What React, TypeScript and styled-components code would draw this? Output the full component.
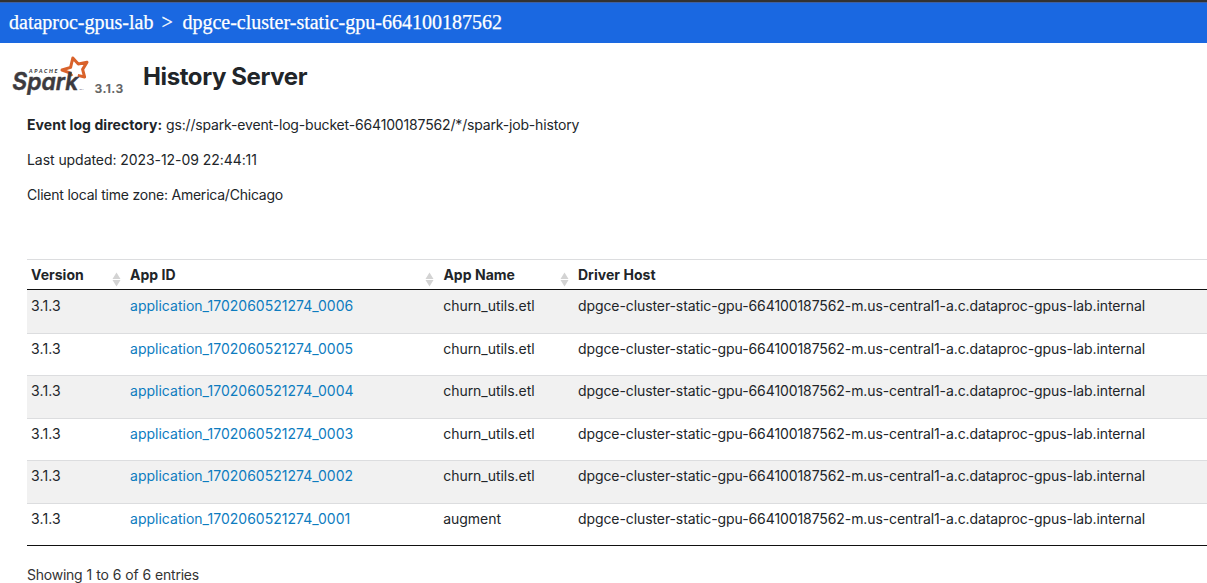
import React from "react";
import styled, { createGlobalStyle } from "styled-components";

const GlobalStyle = createGlobalStyle`
  * { box-sizing: border-box; }
  html, body { margin: 0; padding: 0; background: #fff; overflow: hidden; }
  body {
    font-family: Inter, "Liberation Sans", sans-serif;
    font-size: 14px;
    line-height: 20px;
    color: #212529;
  }
`;

const Page = styled.div`
  width: 100%;
  height: 583px;
  overflow: hidden;
`;

const ClusterBar = styled.header`
  display: flex;
  align-items: flex-start;
  height: 43px;
  padding: 0 0 0 9px;
  border-top: 2px solid #323232;
  box-shadow: inset 0 1px 0 #3f5f9f;
  background: #1a68e1;
  color: #fff;
  font: 20px/41px "Liberation Serif", serif;
  -webkit-text-stroke: 0.25px #fff;
  white-space: pre;
`;

const Separator = styled.span`
  width: 29px;
  padding-left: 8px;
`;

const TitleRow = styled.div`
  display: flex;
  height: 72px;
  padding-left: 12px;
`;

const Logo = styled.svg`
  display: block;
  width: 80px;
  height: 44px;
  margin-top: 12px;
`;

const Wordmark = styled.text`
  font: italic 600 24px Inter, sans-serif;
  font-feature-settings: "cv11";
  fill: #3c3a3e;
  stroke: #3c3a3e;
  stroke-width: 0.5px;
  stroke-linejoin: round;
`;

const Version = styled.span`
  width: 51px;
  padding: 36px 0 0 2.5px;
  color: #666;
  font-size: 12px;
  font-weight: 700;
  letter-spacing: 0.4px;
`;

const Title = styled.h1`
  margin: 19px 0 0;
  font-size: 24px;
  line-height: 30px;
  font-weight: 700;
  letter-spacing: -0.4px;
`;

const Details = styled.ul`
  display: flex;
  flex-direction: column;
  gap: 15px;
  height: 144px;
  margin: 0;
  padding: 0 0 0 27px;
  list-style: none;
`;

const Text = styled.span<{ $spacing: number; $word?: number }>`
  letter-spacing: ${(p) => p.$spacing}px;
  word-spacing: ${(p) => p.$word ?? 0}px;
  white-space: nowrap;
`;

const Label = styled.strong`
  font-weight: 700;
  letter-spacing: 0.07px;
`;

const Table = styled.div`
  margin-left: 27px;
  border-top: 1px solid #dcdddf;
  border-bottom: 1px solid #111;
`;

const Row = styled.div<{ $shaded?: boolean }>`
  display: grid;
  grid-template-columns: 99px 313.2px 134.8px 1fr;
  height: 42.5px;
  padding-top: 6px;
  background: ${(p) => (p.$shaded ? "#f1f1f1" : "#fff")};

  & + & {
    padding-top: 5px;
    border-top: 1px solid #dcdddf;
  }
`;

const HeadRow = styled.div`
  display: grid;
  grid-template-columns: 99px 313.4px 134.6px 1fr;
  height: 30px;
  padding-top: 5px;
  border-bottom: 1px solid #111;
  font-weight: 700;
  letter-spacing: 0.03px;
`;

const Cell = styled.div`
  padding-left: 4px;
  white-space: nowrap;
`;

const HeadCell = styled(Cell)`
  display: flex;
  justify-content: space-between;
  padding-right: 5px;
`;

const SortIcon = styled.svg`
  width: 9px;
  height: 16px;
  margin-top: 7px;
`;

const AppLink = styled.a`
  color: #0d7cbf;
  letter-spacing: 0.015px;
  text-decoration: none;
`;

const Info = styled.div`
  padding: 19px 0 0 27px;
  color: #333;
`;

const host = "dpgce-cluster-static-gpu-664100187562-m.us-central1-a.c.dataproc-gpus-lab.internal";

const apps = [
  { id: "application_1702060521274_0006", name: "churn_utils.etl" },
  { id: "application_1702060521274_0005", name: "churn_utils.etl" },
  { id: "application_1702060521274_0004", name: "churn_utils.etl" },
  { id: "application_1702060521274_0003", name: "churn_utils.etl" },
  { id: "application_1702060521274_0002", name: "churn_utils.etl" },
  { id: "application_1702060521274_0001", name: "augment" },
];

const columns = ["Version", "App ID", "App Name", "Driver Host"];

function SparkLogo() {
  return (
    <Logo viewBox="0 0 80 44" role="img" aria-label="Apache Spark">
      <path
        d="M60 21 L57.8 17.8 L50 15 L58.6 12.4 L60.8 3 L66.3 9 L75 7.2 L70.6 14.4 L72.6 22 L65.8 20.4"
        fill="none"
        stroke="#d9622b"
        strokeWidth="3"
        strokeLinejoin="round"
      />
      <text x="17" y="18.4" fontFamily="Lato, sans-serif" fontSize="5.4" fontWeight="900" fontStyle="italic" fill="#3c3a3e" textLength="28.5">APACHE</text>
      <Wordmark x="0.3" y="34.5" textLength="66" lengthAdjust="spacingAndGlyphs">Spark</Wordmark>
      <text x="67.5" y="35" fontFamily="Lato, sans-serif" fontSize="2.6" fill="#3c3a3e">TM</text>
    </Logo>
  );
}

export default function App() {
  return (
    <>
      <GlobalStyle />
      <Page>
        <ClusterBar>
          <span>dataproc-gpus-lab</span>
          <Separator>&gt;</Separator>
          <span>dpgce-cluster-static-gpu-664100187562</span>
        </ClusterBar>
        <TitleRow>
          <SparkLogo />
          <Version>3.1.3</Version>
          <Title>History Server</Title>
        </TitleRow>
        <Details>
          <li><Text $spacing={-0.165}><Label>Event log directory:</Label> gs://spark-event-log-bucket-664100187562/*/spark-job-history</Text></li>
          <li><Text $spacing={-0.06}>Last updated: 2023-12-09 22:44:11</Text></li>
          <li><Text $spacing={-0.22}>Client local time zone: America/Chicago</Text></li>
        </Details>
        <Table>
          <HeadRow>
            {columns.map((c, i) => (
              <HeadCell key={c}>
                {c}
                {i < 3 && (
                  <SortIcon viewBox="0 0 9 16">
                    <path d="M4.5 0.5 L8.5 7 H.5 Z M4.5 14.5 L.5 8 H8.5 Z" fill="#d3d3d3" />
                  </SortIcon>
                )}
              </HeadCell>
            ))}
          </HeadRow>
          {apps.map((a, i) => (
            <Row key={a.id} $shaded={i % 2 === 0}>
              <Cell><Text $spacing={0.15}>3.1.3</Text></Cell>
              <Cell><AppLink>{a.id}</AppLink></Cell>
              <Cell><Text $spacing={-0.03}>{a.name}</Text></Cell>
              <Cell><Text $spacing={-0.09}>{host}</Text></Cell>
            </Row>
          ))}
        </Table>
        <Info><Text $spacing={-0.24} $word={0.45}>Showing 1 to 6 of 6 entries</Text></Info>
      </Page>
    </>
  );
}
